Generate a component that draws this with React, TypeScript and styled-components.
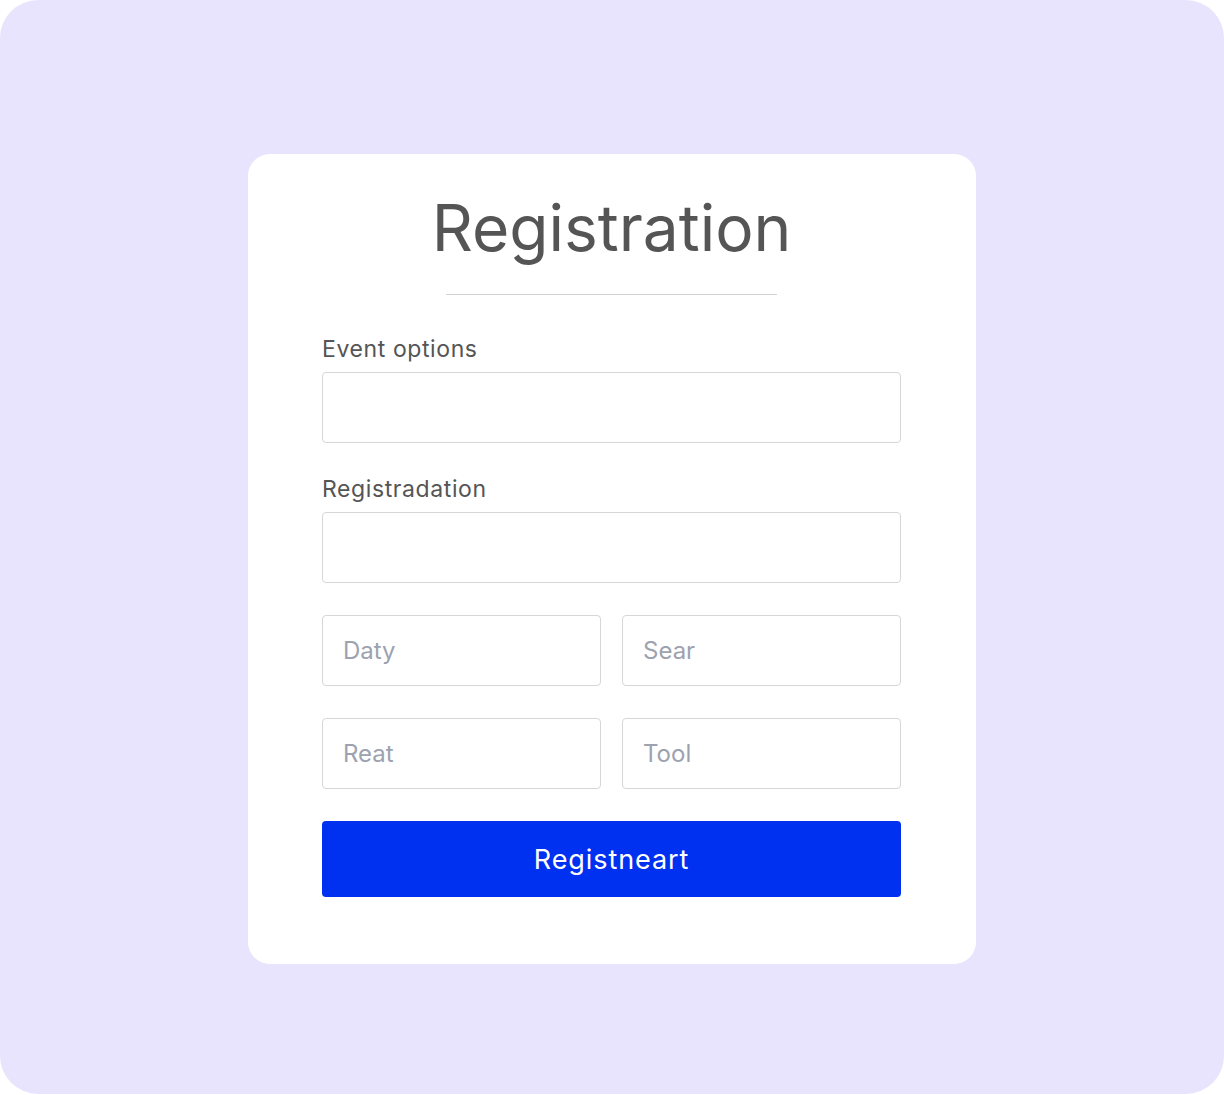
import React from 'react';
import styled, { createGlobalStyle } from 'styled-components';

const GlobalStyle = createGlobalStyle`
  html, body {
    margin: 0;
    padding: 0;
    background: #ffffff;
  }
  * {
    box-sizing: border-box;
  }
  body {
    font-family: Inter, "Noto Sans", sans-serif;
  }
`;

const Frame = styled.div`
  width: 1224px;
  height: 1094px;
  background: #e9e4fd;
  border-radius: 38px;
  padding-top: 154px;
  display: flex;
  justify-content: center;
  align-items: flex-start;
`;

const Card = styled.form`
  width: 728px;
  background: #ffffff;
  border-radius: 22px;
  padding: 35px 75px 67px 74px;
  display: flex;
  flex-direction: column;
`;

const Title = styled.h1`
  margin: 0;
  font-size: 64px;
  line-height: 77px;
  font-weight: 400;
  color: #555555;
  text-align: center;
`;

const Divider = styled.hr`
  width: 331px;
  margin: 28px auto 0;
  border: none;
  border-top: 1px solid #d2d2d2;
`;

const Field = styled.label<{ $first?: boolean }>`
  display: flex;
  flex-direction: column;
  gap: 10px;
  margin-top: ${(p) => (p.$first ? '41px' : '33px')};
`;

const LabelText = styled.span`
  font-size: 23px;
  line-height: 26px;
  letter-spacing: 0.6px;
  color: #555555;
`;

const Input = styled.input`
  width: 100%;
  height: 71px;
  border: 1px solid #d6d6d6;
  border-radius: 4px;
  padding: 0 20px;
  font-family: inherit;
  font-size: 24px;
  color: #333;
  background: #fff;
  outline: none;

  &::placeholder {
    color: #9da2af;
  }
`;

const Row = styled.div`
  display: grid;
  grid-template-columns: 1fr 1fr;
  gap: 21px;
  margin-top: 32px;
`;

const SubmitButton = styled.button`
  margin-top: 32px;
  height: 76px;
  width: 100%;
  border: none;
  border-radius: 4px;
  background: #0030f0;
  color: #ffffff;
  font-family: inherit;
  font-size: 27px;
  letter-spacing: 0.9px;
  cursor: pointer;
`;

const App: React.FC = () => {
  return (
    <>
      <GlobalStyle />
      <Frame>
        <Card onSubmit={(e) => e.preventDefault()}>
          <Title>Registration</Title>
          <Divider />
          <Field $first>
            <LabelText>Event options</LabelText>
            <Input type="text" />
          </Field>
          <Field>
            <LabelText>Registradation</LabelText>
            <Input type="text" />
          </Field>
          <Row>
            <Input type="text" placeholder="Daty" />
            <Input type="text" placeholder="Sear" />
          </Row>
          <Row>
            <Input type="text" placeholder="Reat" />
            <Input type="text" placeholder="Tool" />
          </Row>
          <SubmitButton type="submit">Registneart</SubmitButton>
        </Card>
      </Frame>
    </>
  );
};

export default App;
